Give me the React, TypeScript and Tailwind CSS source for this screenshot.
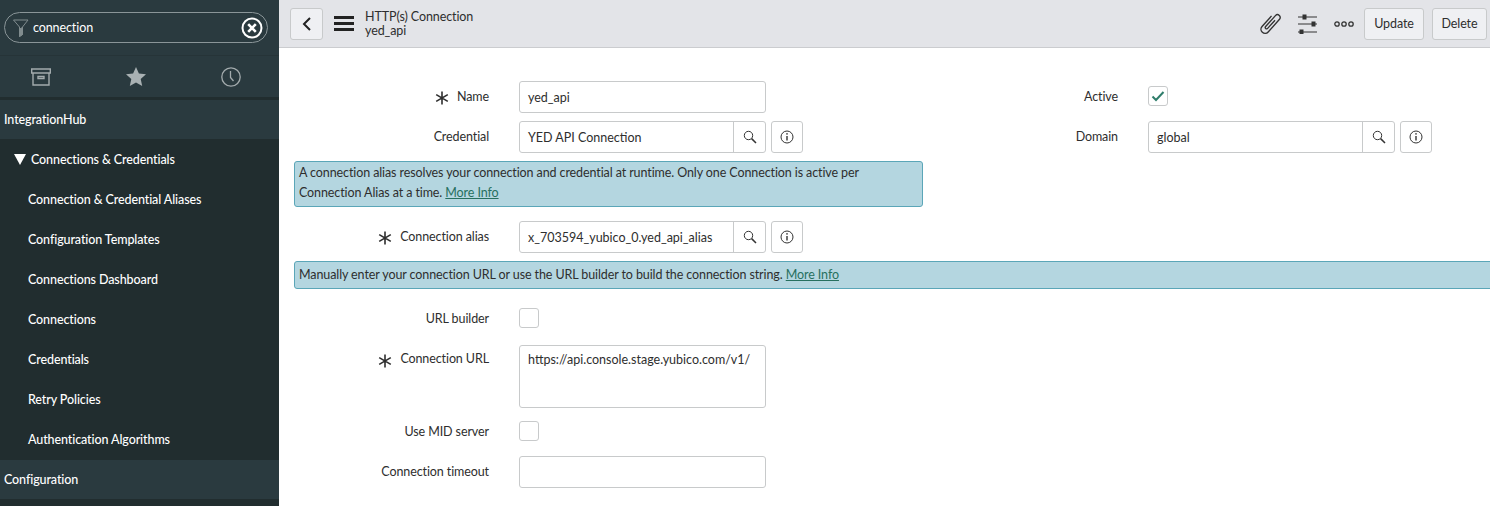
import type { ReactNode } from 'react';

const navItems = [
  'Connection & Credential Aliases',
  'Configuration Templates',
  'Connections Dashboard',
  'Connections',
  'Credentials',
  'Retry Policies',
  'Authentication Algorithms',
];

function Asterisk() {
  return (
    <svg width="14" height="14" viewBox="0 0 14 14" stroke="#2e2e2e" strokeWidth="1.6" fill="none">
      <path d="M7 0.5V13.5M1.2 3.6L12.8 10.4M12.8 3.6L1.2 10.4" />
    </svg>
  );
}

function SearchIcon() {
  return (
    <svg width="14" height="14" viewBox="0 0 14 14" stroke="#333" fill="none">
      <circle cx="5.5" cy="5.5" r="4.2" strokeWidth="1" />
      <path d="M8.6 8.6L13 13" strokeWidth="1.5" />
    </svg>
  );
}

function InfoButton() {
  return (
    <div className="ml-[5px] flex h-8 w-8 items-center justify-center rounded-[3px] border border-[#c8cacb] bg-white">
      <svg width="14" height="14" viewBox="0 0 14 14" fill="none" stroke="#333">
        <circle cx="7" cy="7" r="6" strokeWidth="1" />
        <path d="M7 6V10.5" strokeWidth="1.4" />
        <circle cx="7" cy="3.9" r="0.8" fill="#333" stroke="none" />
      </svg>
    </div>
  );
}

function Label({ children, required }: { children: ReactNode; required?: boolean }) {
  return (
    <div className="flex w-[195px] shrink-0 items-center justify-end text-[#2e2e2e]">
      {required && <span className="mr-2 mt-[2px] flex"><Asterisk /></span>}
      <span>{children}</span>
    </div>
  );
}

function TextBox({ value, className = 'w-[247px]' }: { value?: string; className?: string }) {
  return (
    <div className={`flex h-8 items-center rounded-[3px] border border-[#c8cacb] bg-white px-2 pt-[2px] tracking-[0px] text-[#2e2e2e] ${className}`}>
      {value}
    </div>
  );
}

function RefField({ value }: { value: string }) {
  return (
    <div className="flex">
      <div className="flex h-8 w-[247px] rounded-[3px] border border-[#c8cacb] bg-white tracking-[0px] text-[#2e2e2e]">
        <div className="flex flex-1 items-center px-2 pt-[2px]">{value}</div>
        <div className="flex w-8 items-center justify-center border-l border-[#c8cacb]">
          <SearchIcon />
        </div>
      </div>
      <InfoButton />
    </div>
  );
}

function Checkbox({ checked }: { checked?: boolean }) {
  return (
    <div className="flex h-5 w-5 items-center justify-center rounded-[3px] border border-[#c8cacb] bg-white">
      {checked && (
        <svg width="14" height="12" viewBox="0 0 14 12" fill="none" stroke="#2f7d6b" strokeWidth="2">
          <path d="M1.5 6.5L5 10L12.5 2" />
        </svg>
      )}
    </div>
  );
}

function Notice({ children, className }: { children: ReactNode; className: string }) {
  return (
    <div className={`rounded-[3px] border border-[#5ba6b8] bg-[#b4d6e0] px-1 text-[#2e2e2e] ${className}`}>
      {children}
    </div>
  );
}

function MoreInfo() {
  return <span className="text-[#27705f] underline">More Info</span>;
}

export default function App() {
  return (
    <div className="flex h-[506px] w-[1490px] overflow-hidden bg-white text-[12.5px] tracking-[-0.1px] font-['Lato','Noto_Sans',sans-serif]">
      <aside className="flex w-[279px] shrink-0 flex-col bg-[#2a3a3f] text-white">
        <div className="flex h-[55px] items-start px-1 pt-3">
          <div className="flex h-[31px] w-[264px] items-center rounded-full border border-[#8a9598] pl-2 pr-1">
            <svg width="16" height="18" viewBox="0 0 16 18" fill="none" stroke="#808c8e" strokeWidth="1">
              <path d="M0.5 1H15L9.5 8V15.5L6.5 17.5V8Z" />
              <path d="M6.5 10L9.5 8.5V15.5L6.5 17.5Z" fill="#808c8e" />
            </svg>
            <span className="ml-1 flex-1 pt-[2px]">connection</span>
            <svg width="22" height="22" viewBox="0 0 22 22" fill="none" stroke="#fff" strokeWidth="2">
              <circle cx="11" cy="11" r="9.5" />
              <path d="M7.2 7.2L14.8 14.8M14.8 7.2L7.2 14.8" strokeWidth="2.6" />
            </svg>
          </div>
        </div>
        <div className="flex h-[42px] items-center border-t border-[#263438] pl-[31px]">
          <svg width="20" height="18" viewBox="0 0 20 18" fill="none" stroke="#a3abad" strokeWidth="1.4">
            <path d="M0.7 1H19.3V5H0.7ZM2 5V17H18V5M7 8.5H13V10.5H7Z" />
          </svg>
          <svg className="ml-[75px]" width="20" height="19" viewBox="0 0 20 19" fill="#a9b1b3">
            <path d="M10 0L12.9 6.4L20 7.2L14.7 12L16.2 19L10 15.4L3.8 19L5.3 12L0 7.2L7.1 6.4Z" />
          </svg>
          <svg className="ml-[75px]" width="20" height="20" viewBox="0 0 20 20" fill="none" stroke="#a3abad" strokeWidth="1.3">
            <circle cx="10" cy="10" r="9.2" />
            <path d="M9.5 4V10.5L12.5 14" />
          </svg>
        </div>
        <div className="h-[3px] bg-[#212d2f]" />
        <div className="flex h-[39px] items-center pl-1 pt-[2px] font-medium">IntegrationHub</div>
        <div className="bg-[#212d2f]">
          <div className="flex h-[41px] items-center pl-[14px] font-medium">
            <svg width="12" height="11" viewBox="0 0 12 11" fill="#fff">
              <path d="M0 0H12L6 11Z" />
            </svg>
            <span className="ml-[5px] pt-[2px]">Connections &amp; Credentials</span>
          </div>
          {navItems.map((item) => (
            <div key={item} className="flex h-10 items-center pl-7 font-medium">
              {item}
            </div>
          ))}
        </div>
        <div className="flex h-[39px] items-center pl-1 pt-[2px] font-medium">Configuration</div>
        <div className="flex-1 bg-[#212d2f]" />
      </aside>

      <main className="min-w-0 flex-1">
        <header className="flex h-[48px] items-center border-b border-[#cbcccf] bg-[#e3e4e8] pl-[11px] pr-[3px] text-[#2e2e2e]">
          <div className="flex h-8 w-[33px] items-center justify-center rounded-[3px] border border-[#c8cacb] bg-[#eff0f3]">
            <svg width="10" height="16" viewBox="0 0 10 16" fill="none" stroke="#222" strokeWidth="2">
              <path d="M8 2L2 8L8 14" />
            </svg>
          </div>
          <svg className="ml-[11px]" width="20" height="16" viewBox="0 0 20 16" fill="#222">
            <rect width="20" height="3" y="0" />
            <rect width="20" height="3" y="6" />
            <rect width="20" height="3" y="12" />
          </svg>
          <div className="ml-[11px] flex-1 leading-[14px]">
            <div>HTTP(s) Connection</div>
            <div>yed_api</div>
          </div>
          <svg width="22" height="22" viewBox="0 0 24 24" fill="none" stroke="#333" strokeWidth="1.5">
            <path transform="rotate(42 12 12)" d="M12.5 6V18A1.5 1.5 0 0 1 9.5 18V2A3 3 0 0 1 15.5 2V20.5A4.5 4.5 0 0 1 6.5 20.5V5" />
          </svg>
          <svg className="ml-4" width="19" height="20" viewBox="0 0 19 20" fill="#333" stroke="#333">
            <path d="M0 3H19M0 10H19M0 18H19" strokeWidth="1" />
            <rect x="5" y="1" width="3" height="4" />
            <rect x="14" y="8" width="3" height="4" />
            <rect x="2" y="16" width="3" height="4" />
          </svg>
          <svg className="ml-[17px]" width="20" height="6" viewBox="0 0 20 6" fill="none" stroke="#333" strokeWidth="1.3">
            <circle cx="3" cy="3" r="2.2" />
            <circle cx="10" cy="3" r="2.2" />
            <circle cx="17" cy="3" r="2.2" />
          </svg>
          <div className="ml-[10px] flex h-8 w-[60px] items-center justify-center rounded-[3px] border border-[#c8cacb] bg-[#eff0f3] pt-[2px]">Update</div>
          <div className="ml-2 flex h-8 w-[55px] items-center justify-center rounded-[3px] border border-[#c8cacb] bg-[#eff0f3] pt-[2px]">Delete</div>
        </header>

        <form className="pl-[15px] pt-[33px]">
          <div className="grid grid-cols-[629px_1fr] gap-y-2">
            <div className="flex items-center">
              <Label required>Name</Label>
              <TextBox value="yed_api" className="ml-[30px] w-[247px]" />
            </div>
            <div className="flex items-center">
              <Label>Active</Label>
              <div className="mb-[2px] ml-[30px]"><Checkbox checked /></div>
            </div>
            <div className="flex items-center">
              <Label>Credential</Label>
              <div className="ml-[30px]"><RefField value="YED API Connection" /></div>
            </div>
            <div className="flex items-center">
              <Label>Domain</Label>
              <div className="ml-[30px]"><RefField value="global" /></div>
            </div>
          </div>

          <Notice className="mt-2 h-[46px] w-[629px] pt-[1px] leading-[20px]">
            A connection alias resolves your connection and credential at runtime. Only one Connection is active per Connection Alias at a time. <MoreInfo />
          </Notice>

          <div className="mt-[14px] flex items-center">
            <Label required>Connection alias</Label>
            <div className="ml-[30px]"><RefField value="x_703594_yubico_0.yed_api_alias" /></div>
          </div>

          <Notice className="-mr-1 mt-2 flex h-7 items-center">
            <span>Manually enter your connection URL or use the URL builder to build the connection string.&nbsp;<MoreInfo /></span>
          </Notice>

          <div className="mt-[19px] flex items-center">
            <div className="pt-[2px]"><Label>URL builder</Label></div>
            <div className="ml-[30px]"><Checkbox /></div>
          </div>

          <div className="mt-4 flex">
            <div className="flex h-[30px] items-center">
              <Label required>Connection URL</Label>
            </div>
            <div className="ml-[30px] h-[63px] w-[247px] rounded-[3px] border border-[#c8cacb] bg-white px-2 pt-[5px] tracking-[0px] text-[#2e2e2e]">
              https://api.console.stage.yubico.com/v1/
            </div>
          </div>

          <div className="mt-[13px] flex items-center">
            <div className="pt-[2px]"><Label>Use MID server</Label></div>
            <div className="ml-[30px]"><Checkbox /></div>
          </div>

          <div className="mt-[14px] flex items-center">
            <div className="pt-[2px]"><Label>Connection timeout</Label></div>
            <TextBox className="ml-[30px] w-[247px]" />
          </div>
        </form>
      </main>
    </div>
  );
}
